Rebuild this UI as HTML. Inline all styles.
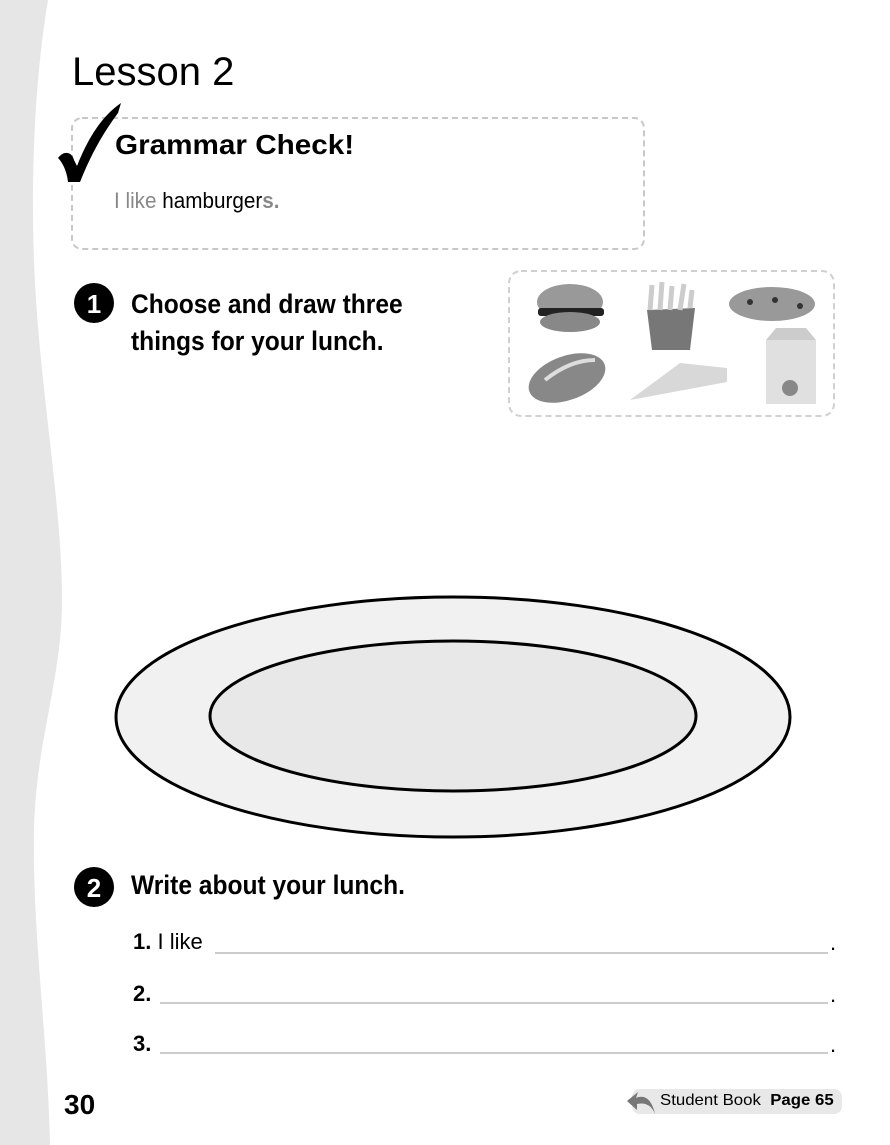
<!DOCTYPE html>
<html><head><meta charset="utf-8"><style>
body{margin:0;width:890px;height:1145px;position:relative;background:#fff;font-family:"Liberation Sans",sans-serif;overflow:hidden}
.a{position:absolute;white-space:nowrap}
.cond{display:inline-block;transform-origin:left}
</style></head><body>
<svg class="a" style="left:0;top:0" width="890" height="1145">
<path d="M0 0 L48 0 C38 60 30 150 34 260 C38 380 62 500 62 600 C62 680 36 740 34 830 C32 930 48 1040 50 1145 L0 1145Z" fill="#e6e6e6"/>
<rect x="72" y="118" width="572" height="131" rx="10" fill="#fff" stroke="#c8c8c8" stroke-width="2" stroke-dasharray="6 4"/>
<rect x="509" y="271" width="325" height="145" rx="12" fill="none" stroke="#d0d0d0" stroke-width="2" stroke-dasharray="6 4"/>
<path d="M58 158 C64 150 72 152 74 160 L77 166 C88 138 102 116 121 103 L118 113 C104 132 92 152 80 182 L68 182 C67 172 63 163 58 158Z" fill="#000"/>
<circle cx="94" cy="303" r="20" fill="#000"/><text x="94" y="313" font-size="26" font-weight="bold" fill="#fff" text-anchor="middle">1</text>
<circle cx="94" cy="887" r="20" fill="#000"/><text x="94" y="897" font-size="26" font-weight="bold" fill="#fff" text-anchor="middle">2</text>
<ellipse cx="570" cy="302" rx="33" ry="18" fill="#999"/><rect x="538" y="308" width="66" height="8" rx="3" fill="#222"/><ellipse cx="570" cy="322" rx="30" ry="10" fill="#888"/>
<path d="M647 310 L695 308 L690 350 L652 350Z" fill="#777"/><path d="M650 310 L652 285 M660 310 L662 282 M670 310 L672 286 M680 310 L684 284 M690 308 L692 290" stroke="#ccc" stroke-width="5"/>
<ellipse cx="772" cy="304" rx="43" ry="17" fill="#999"/><circle cx="750" cy="302" r="3" fill="#333"/><circle cx="775" cy="300" r="3" fill="#333"/><circle cx="800" cy="306" r="3" fill="#333"/>
<ellipse cx="567" cy="378" rx="40" ry="22" fill="#888" transform="rotate(-20 567 378)"/><path d="M545 380 Q570 360 595 360" stroke="#ddd" stroke-width="4" fill="none"/>
<path d="M630 400 L680 363 L727 368 L727 382 Z" fill="#d8d8d8"/>
<rect x="766" y="340" width="50" height="64" fill="#e0e0e0"/><path d="M766 340 L776 328 L806 328 L816 340Z" fill="#ccc"/><circle cx="790" cy="388" r="8" fill="#888"/>
<ellipse cx="453" cy="717" rx="337" ry="120" fill="#f1f1f1" stroke="#000" stroke-width="3"/>
<ellipse cx="453" cy="716" rx="243" ry="75" fill="#e8e8e8" stroke="#000" stroke-width="3"/>
<line x1="215" y1="953" x2="828" y2="953" stroke="#bbb" stroke-width="1.5"/>
<line x1="160" y1="1003" x2="828" y2="1003" stroke="#bbb" stroke-width="1.5"/>
<line x1="160" y1="1053" x2="828" y2="1053" stroke="#bbb" stroke-width="1.5"/>
<rect x="632" y="1089" width="210" height="25" rx="8" fill="#e8e8e8"/>
<path d="M655 1114 C652 1100 645 1094 636 1098 L638 1092 L627 1101 L637 1110 L637 1104 C646 1102 652 1106 655 1114Z" fill="#777"/>
</svg>
<div class="a" style="left:72px;top:50px;font-size:40px"><span class="cond">Lesson 2</span></div>
<div class="a" style="left:115px;top:129px;font-size:28px;font-weight:bold"><span class="cond" style="transform:scaleX(1.06)">Grammar Check!</span></div>
<div class="a" style="left:114px;top:188px;font-size:22px"><span class="cond" style="transform:scaleX(.94)"><span style="color:#888">I like</span> hamburger<span style="color:#888;font-weight:bold">s.</span></span></div>
<div class="a" style="left:131px;top:286px;font-size:27px;font-weight:bold;line-height:37px"><span class="cond" style="transform:scaleX(.91)">Choose and draw three<br>things for your lunch.</span></div>
<div class="a" style="left:131px;top:870px;font-size:27px;font-weight:bold"><span class="cond" style="transform:scaleX(.91)">Write about your lunch.</span></div>
<div class="a" style="left:133px;top:929px;font-size:22px"><b>1.</b> I like</div>
<div class="a" style="left:133px;top:981px;font-size:22px;font-weight:bold">2.</div>
<div class="a" style="left:133px;top:1031px;font-size:22px;font-weight:bold">3.</div>
<div class="a" style="left:830px;top:930px;font-size:22px">.</div>
<div class="a" style="left:830px;top:982px;font-size:22px">.</div>
<div class="a" style="left:830px;top:1032px;font-size:22px">.</div>
<div class="a" style="left:64px;top:1089px;font-size:28px;font-weight:bold">30</div>
<div class="a" style="left:660px;top:1092px;font-size:16px"><span class="cond" style="transform:scaleX(1.05)">Student Book &nbsp;<b>Page 65</b></span></div>
</body></html>
